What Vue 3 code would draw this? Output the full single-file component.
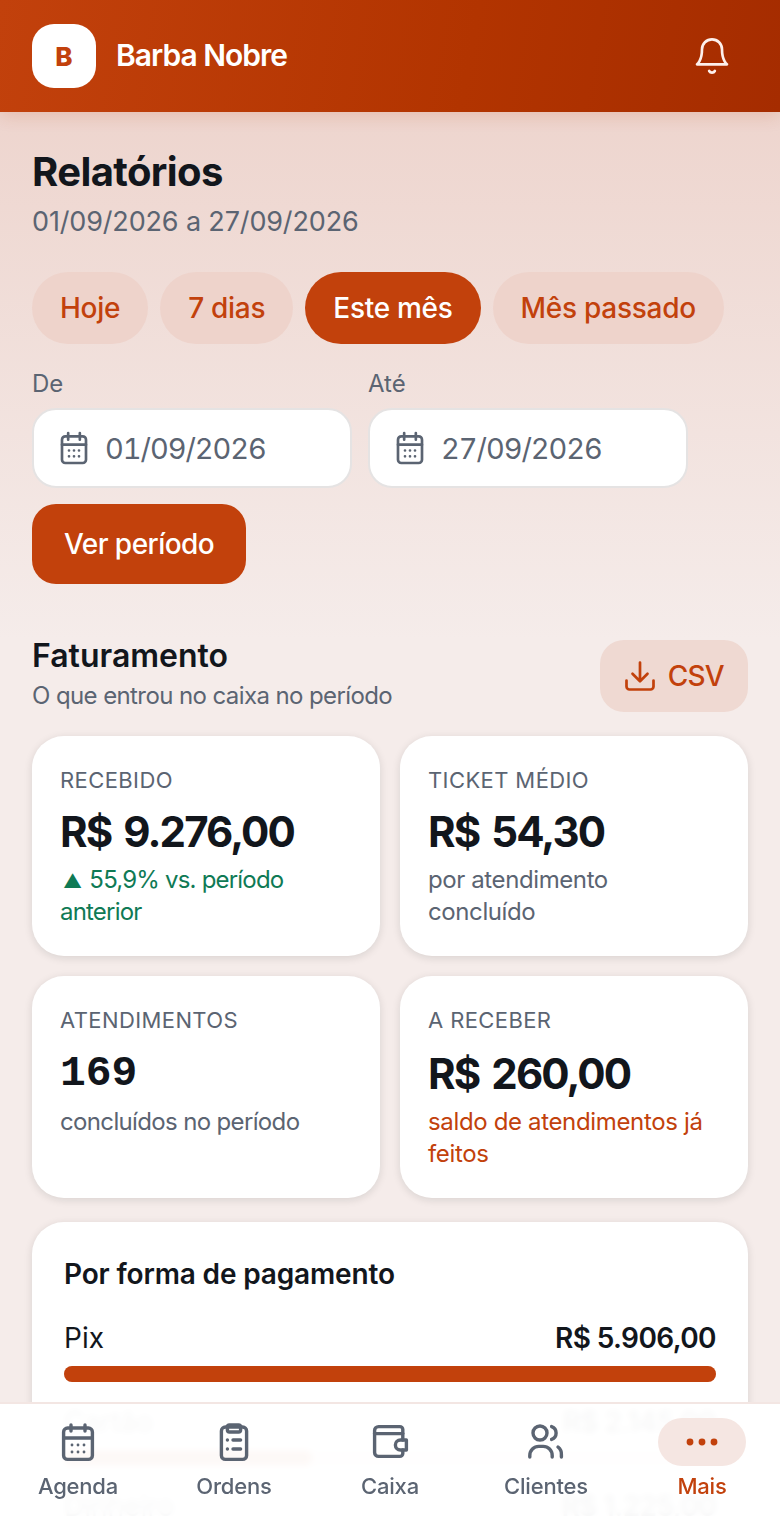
<template>
  <div class="screen">
    <header class="topbar">
      <div class="brand">
        <div class="logo">B</div>
        <span class="brand-name">Barba Nobre</span>
      </div>
      <svg class="bell" width="40" height="40" viewBox="0 0 24 24" fill="none" stroke="currentColor" stroke-width="1.6" stroke-linecap="round" stroke-linejoin="round">
        <path d="M6 8a6 6 0 0 1 12 0c0 7 3 9 3 9H3s3-2 3-9" />
        <path d="M10.3 21a1.94 1.94 0 0 0 3.4 0" />
      </svg>
    </header>

    <main class="content">
      <h1>Relatórios</h1>
      <p class="range">01/09/2026 a 27/09/2026</p>

      <div class="chips">
        <button v-for="c in chips" :key="c" class="chip" :class="{ active: c === 'Este mês' }">{{ c }}</button>
      </div>

      <div class="dates">
        <label v-for="d in dates" :key="d.label" class="date-field">
          <span class="date-label">{{ d.label }}</span>
          <span class="date-input">
            <svg width="40" height="40" viewBox="0 0 24 24" fill="none" stroke="currentColor" stroke-width="1.6" stroke-linecap="round" stroke-linejoin="round">
              <rect x="4.800" y="5" width="14.400" height="16" rx="2" />
              <path d="M8.500 3v4M15.500 3v4M4.800 10h14.400" />
              <path d="M9 13.500h.01M12 13.500h.01M15 13.500h.01M9 17h.01M12 17h.01M15 17h.01" />
            </svg>
            {{ d.value }}
          </span>
        </label>
      </div>
      <button class="apply">Ver período</button>

      <div class="section-head">
        <div>
          <h2>Faturamento</h2>
          <p>O que entrou no caixa no período</p>
        </div>
        <button class="csv">
          <svg width="36" height="36" viewBox="0 0 24 24" fill="none" stroke="currentColor" stroke-width="1.800" stroke-linecap="round" stroke-linejoin="round">
            <path d="M12 3v12M7 10.500l5 5 5-5" />
            <path d="M3 15v4a2 2 0 0 0 2 2h14a2 2 0 0 0 2-2v-4" />
          </svg>
          CSV
        </button>
      </div>

      <div class="stats">
        <div v-for="s in stats" :key="s.label" class="stat">
          <div class="stat-label">{{ s.label }}</div>
          <div class="stat-value" :class="{ plain: s.plain }">{{ s.value }}</div>
          <div class="stat-note" :class="s.tone">
            <span v-if="s.tone === 'up'" class="tri">▲</span>
            {{ s.note }}
          </div>
        </div>
      </div>

      <section class="payments">
        <h3>Por forma de pagamento</h3>
        <div v-for="p in payments" :key="p.name" class="pay">
          <div class="pay-row">
            <span>{{ p.name }}</span>
            <strong>{{ p.value }}</strong>
          </div>
          <div class="track">
            <div class="fill" :style="{ width: p.pct + '%' }"></div>
          </div>
        </div>
      </section>
    </main>

    <nav class="tabs">
      <div v-for="t in tabs" :key="t.name" class="tab" :class="{ on: t.name === 'Mais' }">
        <span class="tab-icon">
          <svg width="48" height="48" viewBox="0 0 24 24" fill="none" stroke="currentColor" stroke-width="1.700" stroke-linecap="round" stroke-linejoin="round">
            <g v-if="t.name === 'Agenda'">
              <rect x="4.800" y="5" width="14.400" height="15.700" rx="2" />
              <path d="M8.500 3.500v3M15.500 3.500v3M4.800 10h14.400" />
              <path d="M9 13.500h.01M12 13.500h.01M15 13.500h.01M9 17h.01M12 17h.01M15 17h.01" stroke-width="1.400" />
            </g>
            <g v-else-if="t.name === 'Ordens'">
              <rect x="5.700" y="4.500" width="12.600" height="16.200" rx="2" />
              <rect x="8.700" y="3.500" width="6.600" height="3.500" rx="1" />
              <path d="M8.700 11h.01M11.500 11h3.800M8.700 15.500h.01M11.500 15.500h3.800" />
            </g>
            <g v-else-if="t.name === 'Caixa'">
              <path d="M18.400 11V5.800a1.500 1.500 0 0 0-1.500-1.500H6.300a2 2 0 0 0-2 2V17.200a2 2 0 0 0 2 2h10.600a1.500 1.500 0 0 0 1.500-1.500V16" />
              <path d="M4.300 7.800h14.100" />
              <path d="M20.200 11h-3a2.500 2.500 0 0 0 0 5h3z" />
            </g>
            <g v-else-if="t.name === 'Clientes'">
              <circle cx="9" cy="7.500" r="3.500" />
              <path d="M3.900 19.500v-.8a4.500 4.500 0 0 1 4.500-4.500h2.200a4.500 4.500 0 0 1 4.500 4.500v.8" />
              <path d="M14.800 4.300a3.400 3.400 0 0 1 0 6.400M18 14.500a4.500 4.500 0 0 1 1.700 3.800v1.200" />
            </g>
            <g v-else>
              <path d="M6 12h.01M12 12h.01M18 12h.01" stroke-width="3.400" />
            </g>
          </svg>
        </span>
        <span class="tab-name">{{ t.name }}</span>
      </div>
    </nav>
  </div>
</template>

<script setup>
const chips = ["Hoje", "7 dias", "Este mês", "Mês passado"];

const dates = [
  { label: "De", value: "01/09/2026" },
  { label: "Até", value: "27/09/2026" },
];

const stats = [
  { label: "RECEBIDO", value: "R$ 9.276,00", note: "55,9% vs. período anterior", tone: "up" },
  { label: "TICKET MÉDIO", value: "R$ 54,30", note: "por atendimento concluído", tone: "" },
  { label: "ATENDIMENTOS", value: "169", note: "concluídos no período", tone: "", plain: true },
  { label: "A RECEBER", value: "R$ 260,00", note: "saldo de atendimentos já feitos", tone: "warn" },
];

const payments = [
  { name: "Pix", value: "R$ 5.906,00", pct: 100 },
  { name: "Cartão", value: "R$ 2.145,00", pct: 38 },
  { name: "Dinheiro", value: "R$ 1.225,00", pct: 21 },
];

const tabs = [{ name: "Agenda" }, { name: "Ordens" }, { name: "Caixa" }, { name: "Clientes" }, { name: "Mais" }];
</script>

<style>
html,
body {
  margin: 0;
  background: #f5ecea;
}
</style>

<style scoped>
.screen {
  position: relative;
  width: 780px;
  height: 1516px;
  overflow: hidden;
  font-family: Inter, "Liberation Sans", sans-serif;
  color: #12161c;
  background: linear-gradient(180deg, #ecd0c8 0, #f5ecea 640px);
}

.topbar {
  height: 112px;
  display: flex;
  align-items: center;
  justify-content: space-between;
  padding: 0 48px 0 32px;
  color: #fff;
  background: linear-gradient(100deg, #c2410c 0%, #b23400 60%, #a52c00 100%);
  box-shadow: 0 4px 16px rgba(194, 65, 12, 0.16);
}

.bell {
  color: #fdf0ec;
}

.brand {
  display: flex;
  align-items: center;
  gap: 20px;
}

.logo {
  width: 64px;
  height: 64px;
  border-radius: 22px;
  background: #fff;
  color: #c2410c;
  font-size: 26px;
  font-weight: 800;
  display: flex;
  align-items: center;
  justify-content: center;
}

.brand-name {
  font-size: 30px;
  line-height: 36px;
  margin-top: -2px;
  font-weight: 600;
  letter-spacing: -1px;
}

.content {
  padding: 32px 32px 0;
}

h1 {
  margin: 0;
  font-size: 40px;
  line-height: 56px;
  font-weight: 700;
  letter-spacing: -0.6px;
}

.range {
  margin: 4px 0 0;
  font-size: 27px;
  line-height: 36px;
  letter-spacing: -0.15px;
  color: #5b6472;
}

.chips {
  display: flex;
  gap: 12px;
  margin-top: 32px;
}

.chip {
  height: 72px;
  padding: 0 28px;
  border: 0;
  border-radius: 36px;
  font: 500 28px Inter, sans-serif;
  letter-spacing: -0.28px;
  color: #c2410c;
  background: #eed3cb;
  white-space: nowrap;
}

.chip.active {
  background: #c2410c;
  color: #fff;
}

.dates {
  display: flex;
  gap: 16px;
  margin-top: 24px;
}

.date-field {
  display: block;
}

.date-label {
  display: block;
  font-size: 24px;
  line-height: 32px;
  color: #5b6472;
  margin-bottom: 8px;
}

.date-input {
  width: 320px;
  height: 80px;
  box-sizing: border-box;
  display: flex;
  align-items: center;
  gap: 11px;
  padding: 0 20px;
  background: #fff;
  border: 2px solid #e5e3e3;
  border-radius: 24px;
  font-size: 29px;
  font-variant-numeric: tabular-nums;
  letter-spacing: -1.05px;
  color: #5b6472;
}

.apply {
  display: block;
  margin-top: 16px;
  height: 80px;
  padding: 0 32px;
  border: 0;
  border-radius: 24px;
  background: #c2410c;
  color: #fff;
  font: 500 28px Inter, sans-serif;
  letter-spacing: -0.55px;
}

.section-head {
  display: flex;
  align-items: center;
  justify-content: space-between;
  margin-top: 52px;
}

h2 {
  margin: 0;
  font-size: 32px;
  line-height: 40px;
  font-weight: 600;
}

.section-head p {
  margin: 4px 0 0;
  font-size: 24px;
  line-height: 32px;
  letter-spacing: -0.6px;
  color: #5b6472;
}

.csv {
  align-self: flex-end;
  height: 72px;
  padding: 0 24px 0 22px;
  display: flex;
  align-items: center;
  gap: 10px;
  border: 0;
  border-radius: 24px;
  background: #efd9d2;
  color: #c2410c;
  font: 500 28px Inter, sans-serif;
  letter-spacing: -0.7px;
}

.stats {
  display: grid;
  grid-template-columns: 1fr 1fr;
  gap: 20px;
  margin-top: 24px;
}

.stat {
  padding: 32px 28px 28px;
  background: #fff;
  border-radius: 32px;
  box-shadow: 0 2px 8px rgba(18, 22, 28, 0.12);
}

.stat-label {
  font-size: 22px;
  line-height: 24px;
  font-weight: 400;
  letter-spacing: 0.4px;
  color: #5b6472;
}

.stat-value {
  margin-top: 15px;
  font-size: 42px;
  line-height: 50px;
  font-weight: 700;
  letter-spacing: -1.9px;
  word-spacing: 4px;
}

.stat:nth-child(n + 3) .stat-value {
  margin-top: 17px;
}

.stat-value.plain {
  font-family: "Liberation Mono", monospace;
  font-size: 43px;
  letter-spacing: 0;
}

.stat-note {
  margin-top: 7px;
  font-size: 24px;
  line-height: 32px;
  letter-spacing: -0.4px;
  color: #5b6472;
}

.stat-value.plain + .stat-note {
  letter-spacing: -0.65px;
}

.tri {
  font-size: 19px;
  line-height: 0;
  margin: 0 2px 0 3px;
}

.stat-note.up {
  color: #0f7a55;
  letter-spacing: -0.8px;
}

.stat-note.warn {
  color: #c2410c;
  letter-spacing: -0.35px;
}

.payments {
  margin-top: 24px;
  padding: 32px;
  background: #fff;
  border-radius: 32px;
  box-shadow: 0 2px 8px rgba(18, 22, 28, 0.12);
}

h3 {
  margin: 0 0 26px;
  font-size: 28px;
  line-height: 40px;
  font-weight: 600;
  letter-spacing: -0.15px;
}

.pay {
  margin-top: 22px;
}

.pay-row {
  display: flex;
  justify-content: space-between;
  font-size: 28px;
  line-height: 36px;
}

.pay-row strong {
  font-weight: 600;
  letter-spacing: -0.6px;
}

.track {
  margin-top: 10px;
  height: 16px;
  border-radius: 8px;
  background: #efd9d2;
}

.fill {
  height: 100%;
  border-radius: 8px;
  background: #c2410c;
}

.tabs {
  position: absolute;
  left: 0;
  right: 0;
  bottom: 0;
  height: 114px;
  box-sizing: border-box;
  display: grid;
  grid-template-columns: repeat(5, 1fr);
  padding-top: 14px;
  background: rgba(255, 255, 255, 0.97);
  backdrop-filter: blur(3px);
  border-top: 2px solid #f3e6e3;
}

.tab {
  display: flex;
  flex-direction: column;
  align-items: center;
  gap: 6px;
  color: #5b6472;
}

.tab-icon {
  width: 88px;
  height: 48px;
  border-radius: 24px;
  display: flex;
  align-items: center;
  justify-content: center;
}

.tab-name {
  font-size: 22px;
  line-height: 28px;
  font-weight: 500;
  letter-spacing: -0.2px;
}

.tab.on {
  color: #c2410c;
}

.tab.on .tab-icon {
  background: #f5e6e2;
}
</style>
